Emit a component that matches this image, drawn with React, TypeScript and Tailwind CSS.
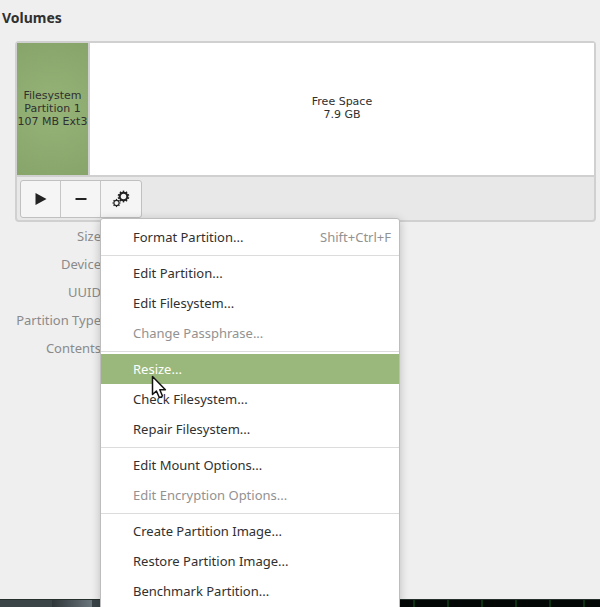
import clsx from "clsx";

type MenuItem = {
  label: string;
  shortcut?: string;
  disabled?: boolean;
  active?: boolean;
};

const menuGroups: MenuItem[][] = [
  [{ label: "Format Partition...", shortcut: "Shift+Ctrl+F" }],
  [
    { label: "Edit Partition..." },
    { label: "Edit Filesystem..." },
    { label: "Change Passphrase...", disabled: true },
  ],
  [
    { label: "Resize...", active: true },
    { label: "Check Filesystem..." },
    { label: "Repair Filesystem..." },
  ],
  [
    { label: "Edit Mount Options..." },
    { label: "Edit Encryption Options...", disabled: true },
  ],
  [
    { label: "Create Partition Image..." },
    { label: "Restore Partition Image..." },
    { label: "Benchmark Partition..." },
  ],
];

const details = ["Size", "Device", "UUID", "Partition Type", "Contents"];

const bigTeeth = [0, 36, 72, 108, 144, 180, 216, 252, 288, 324];
const smallTeeth = [0, 45, 90, 135, 180, 225, 270, 315];

const GearsIcon = () => (
  <svg viewBox="0 0 18 18" className="h-[18px] w-[18px]" fill="none" stroke="#222222" aria-hidden="true">
    <circle cx="11.5" cy="6.5" r="3.8" strokeWidth="2.1" />
    {bigTeeth.map((angle) => (
      <path key={angle} d="M11.5 2.4V0.6" strokeWidth="1.5" transform={`rotate(${angle} 11.5 6.5)`} />
    ))}
    <circle cx="4.5" cy="13" r="2.6" strokeWidth="1.1" />
    {smallTeeth.map((angle) => (
      <path key={angle} d="M4.5 10.2V8.9" strokeWidth="1.2" transform={`rotate(${angle} 4.5 13)`} />
    ))}
  </svg>
);

const Pointer = () => (
  <svg
    viewBox="0 0 16 24"
    className="pointer-events-none absolute left-[50px] top-[21px] z-10 h-6 w-4"
    aria-hidden="true"
  >
    <path
      d="M1.5 1.5V19.5L5.4 16L8.2 22.2Q10.8 22.6 11.4 20.8L8.8 14.8H14.4Z"
      fill="#ffffff"
      stroke="#111111"
      strokeWidth="1.5"
      strokeLinejoin="round"
    />
  </svg>
);

const PartitionMenu = () => (
  <div
    role="menu"
    aria-label="Partition options"
    className="absolute left-[83px] top-[41px] w-[300px] rounded-t-[3px] border border-[#bdbdbd] bg-white py-[3px] shadow-[0_2px_10px_rgba(0,0,0,0.22)]"
  >
    {menuGroups.map((group, index) => (
      <div
        key={index}
        role="group"
        className={clsx(index > 0 && "mt-[3px] border-t border-[#dcdcdc] pt-[2px]")}
      >
        {group.map((item) => (
          <div key={item.label} className="relative">
            <button
              type="button"
              role="menuitem"
              disabled={item.disabled}
              className={clsx(
                "flex h-[30px] w-full items-center justify-between pl-8 pr-2 text-left",
                item.active && "bg-[#9ab87c] text-white",
                item.disabled && "text-[#929292]"
              )}
            >
              <span>{item.label}</span>
              {item.shortcut && <span className="text-[#929292]">{item.shortcut}</span>}
            </button>
            {item.active && <Pointer />}
          </div>
        ))}
      </div>
    ))}
  </div>
);

const Desktop = () => (
  <div className="flex h-2 shrink-0 border-t border-[#26302b] bg-[#030807]">
    <div className="w-[52px] bg-[#3b4548]" />
    <div className="w-10 bg-gradient-to-r from-[#30373a] to-[#6a757c]" />
    <div className="mr-[61px] w-[260px] bg-[#394347]" />
    <div className="flex-1 bg-[repeating-linear-gradient(90deg,#0b3313_0px,#0b3313_2px,#030807_2px,#030807_34px)]" />
  </div>
);

export default function App() {
  return (
    <div className="flex h-screen flex-col overflow-hidden bg-[#efefef] font-['Noto_Sans',sans-serif] text-[13px] leading-5 text-[#303030]">
      <main className="flex-1">
        <h2 className="px-0.5 pt-2 text-sm font-bold">Volumes</h2>

        <section className="ml-[15px] mr-1 mt-[13px] rounded-[4px] border-2 border-[#d0d0d0] bg-[#e8e8e8]">
          <div className="flex h-[134px] border-b-2 border-[#d0d0d0] bg-white text-center font-['DejaVu_Sans',sans-serif] text-[11px] leading-[13px]">
            <div className="flex w-[73px] shrink-0 flex-col justify-center border-r-2 border-[#d0d0d0] bg-[radial-gradient(circle,#96b478,#87a56a)] pb-[2px]">
              <p>Filesystem</p>
              <p>Partition 1</p>
              <p className="whitespace-nowrap">107 MB Ext3</p>
            </div>
            <div className="flex flex-1 flex-col justify-center pb-[2px]">
              <p>Free Space</p>
              <p>7.9 GB</p>
            </div>
          </div>

          <div className="relative px-[3px] pb-[2px] pt-[3px]">
            <div className="inline-flex h-[38px] divide-x divide-[#c6c6c6] rounded-[3px] border border-[#c0c0c0] bg-[#f5f5f5] align-top">
              <button type="button" aria-label="Mount" className="flex w-10 items-center justify-center">
                <svg viewBox="0 0 12 12" className="h-3 w-3" fill="#222222" aria-hidden="true">
                  <path d="M0.5 0L11.5 6L0.5 12Z" />
                </svg>
              </button>
              <button type="button" aria-label="Delete partition" className="flex w-10 items-center justify-center">
                <svg viewBox="0 0 12 12" className="h-3 w-3" fill="#222222" aria-hidden="true">
                  <path d="M0.5 5H11.5V7H0.5Z" />
                </svg>
              </button>
              <button
                type="button"
                aria-label="More actions"
                aria-haspopup="menu"
                aria-expanded="true"
                className="flex w-10 items-center justify-center"
              >
                <GearsIcon />
              </button>
            </div>
            <PartitionMenu />
          </div>
        </section>

        <dl className="w-[101px] text-right leading-7 text-[#8a8a8a]">
          {details.map((label) => (
            <dt key={label}>{label}</dt>
          ))}
        </dl>
      </main>
      <Desktop />
    </div>
  );
}
